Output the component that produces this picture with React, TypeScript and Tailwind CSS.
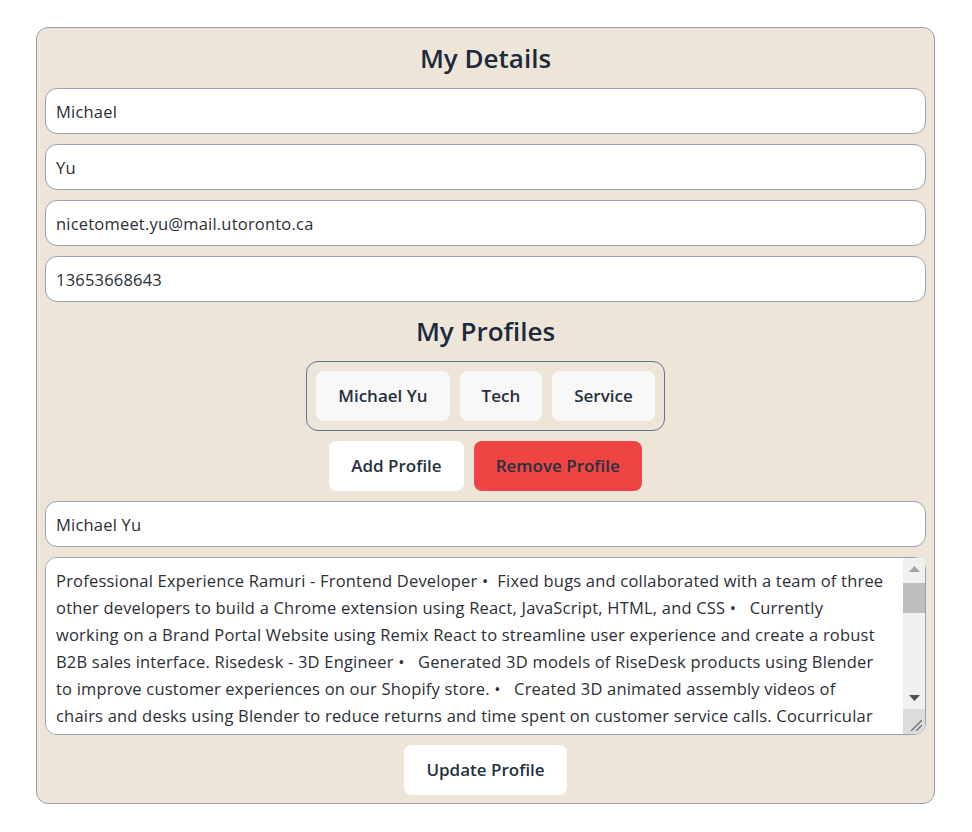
import { useState } from "react";

// line breaks follow the wrap of the original box
const BIO = [
  "Professional Experience Ramuri - Frontend Developer •  Fixed bugs and collaborated with a team of three",
  "other developers to build a Chrome extension using React, JavaScript, HTML, and CSS •   Currently",
  "working on a Brand Portal Website using Remix React to streamline user experience and create a robust",
  "B2B sales interface. Risedesk - 3D Engineer •   Generated 3D models of RiseDesk products using Blender",
  "to improve customer experiences on our Shopify store. •   Created 3D animated assembly videos of",
  "chairs and desks using Blender to reduce returns and time spent on customer service calls. Cocurricular",
  "Experience UofT Hacks - Organizer •   Coordinated logistics for a hackathon of over 500 participants and managed sponsor relations •   Built the event website using Next.js and Tailwind CSS. Education University of Toronto - Computer Science •   Relevant coursework: Data Structures, Algorithms, Software Design, Databases, Operating Systems, Computer Graphics. Skills Languages: JavaScript, TypeScript, Python, Java, C, SQL, HTML, CSS •   Frameworks: React, Remix, Next.js, Node.js, Express, Tailwind CSS •   Tools: Git, Docker, Blender, Figma, Shopify, Firebase, PostgreSQL. Projects Portfolio Builder - Full Stack Developer •   Built a profile manager that lets users create, edit and switch between multiple resumes and bios. •   Stored profiles in a database and synced them across devices.",
].join("\n");

const inputCls =
  "w-full h-[46px] rounded-xl border border-gray-400 bg-white px-2.5 text-[16.5px] tracking-[0.2px] text-[#2b2f36] outline-none";

const btnCls = "h-[50px] rounded-lg px-[22px] text-[17px] font-semibold text-[#26313f]";

// headless hides real scrollbars, so the bio box gets a drawn one on top
function FakeScrollbar() {
  return (
    <div className="pointer-events-none absolute right-px top-px bottom-px flex w-[22px] flex-col rounded-br-xl bg-[#f0f0f0]">
      <div className="flex h-[22px] items-center justify-center">
        <svg width="11" height="6" viewBox="0 0 11 6">
          <path d="M0 6 L5.5 0 L11 6 Z" fill="#a3a3a3" />
        </svg>
      </div>
      <div className="flex-1 pt-[3px]">
        <div className="h-[30px] w-full bg-[#bdbdbd]" />
      </div>
      <div className="flex h-[22px] items-center justify-center">
        <svg width="11" height="6" viewBox="0 0 11 6">
          <path d="M0 0 L11 0 L5.5 6 Z" fill="#505050" />
        </svg>
      </div>
      <div className="flex h-[25px] items-end justify-end rounded-br-xl bg-[#dcdcdc] pb-[3px] pr-[3px]">
        <svg width="12" height="12" viewBox="0 0 12 12">
          <path d="M1 12 L12 1 M6 12 L12 6" stroke="#6b6b6b" strokeWidth="1.3" />
        </svg>
      </div>
    </div>
  );
}

export default function App() {
  const [profiles] = useState(["Michael Yu", "Tech", "Service"]);

  return (
    <div className="min-h-screen bg-white pt-[27px] font-['Open_Sans',sans-serif] text-slate-800">
      <div className="ml-[36px] flex w-[899px] flex-col items-center gap-2.5 rounded-xl border border-gray-400 bg-[#ede6d8] p-2">
        <h1 className="flex h-[42px] items-center pt-0.5 text-[26px] font-semibold">My Details</h1>
        <input className={inputCls} defaultValue="Michael" />
        <input className={inputCls} defaultValue="Yu" />
        <input className={inputCls} defaultValue="nicetomeet.yu@mail.utoronto.ca" />
        <input className={inputCls} defaultValue="13653668643" />

        <h2 className="flex h-[39px] items-center text-[26px] font-semibold">My Profiles</h2>
        <div className="flex gap-2.5 rounded-xl border border-slate-500 p-[9px]">
          {profiles.map((p) => (
            <button key={p} className={`${btnCls} bg-[#f8f8f8]`}>
              {p}
            </button>
          ))}
        </div>

        <div className="flex gap-2.5">
          <button className={`${btnCls} bg-white`}>Add Profile</button>
          <button className={`${btnCls} bg-[#ef4444]`}>Remove Profile</button>
        </div>

        <input className={inputCls} defaultValue="Michael Yu" />
        <div className="relative w-full">
          <textarea
            className="block h-[178px] w-full resize-none overflow-y-scroll rounded-xl border border-gray-400 bg-white py-[9px] pl-2.5 pr-[24px] text-[16.5px] leading-[27px] tracking-[0.2px] text-[#2b2f36] outline-none"
            defaultValue={BIO}
          />
          <FakeScrollbar />
        </div>

        <button className={`${btnCls} bg-white`}>Update Profile</button>
      </div>
    </div>
  );
}
